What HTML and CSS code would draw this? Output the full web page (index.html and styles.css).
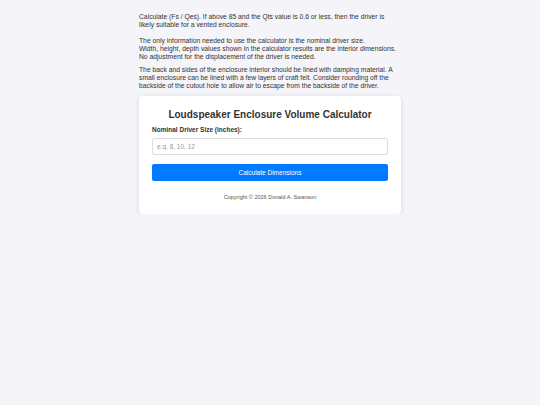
FILE: index.html
```html
<!DOCTYPE html>
<html lang="en">
  <head>
    <meta charset="UTF-8" />
    <meta name="viewport" content="width=device-width, initial-scale=1.0" />
    <title>Loudspeaker Enclosure Volume Calculator</title>
    <link rel="stylesheet" href="styles.css">
  </head>
  <body>
    <div id="page">
      <!-- notes above the calculator -->
      <div id="notes">
        <p class="intro">
          Calculate (Fs / Qes). If above 85 and the Qts value is 0.6 or less, then the driver is
          likely suitable for a vented enclosure.
        </p>
        <p>
          The only information needed to use the calculator is the nominal driver size.<br />
          Width, height, depth values shown in the calculator results are the interior dimensions.<br />
          No adjustment for the displacement of the driver is needed.
        </p>
        <p>
          The back and sides of the enclosure interior should be lined with damping material. A
          small enclosure can be lined with a few layers of craft felt. Consider rounding off the
          backside of the cutout hole to allow air to escape from the backside of the driver.
        </p>
      </div>

      <!-- CALCULATOR -->
      <div id="calculator">
        <h1 id="calcTitle">Loudspeaker Enclosure Volume Calculator</h1>
        <label for="driverSize" class="fieldLabel">Nominal Driver Size (inches):</label>
        <input type="text" id="driverSize" placeholder="e.g. 8, 10, 12" />
        <button id="calcButton">Calculate Dimensions</button>
        <div id="results"></div>
        <div id="copyright">Copyright © 2026 Donald A. Swanson</div>
      </div>
    </div>
  </body>
</html>
```

FILE: styles.css
```css
body {
  margin: 0;
  background-color: #f4f4f9;
  color: #333;
  font-family: "Liberation Sans", Arial, sans-serif;
}

#page {
  width: 262px;
  margin: 0 auto;
  padding-top: 13px;
}

#notes p {
  margin: 0 0 5px;
  font-size: 6.75px;
  line-height: 8px;
}

#notes p.intro {
  margin-bottom: 8px;
}

#calculator {
  margin-top: 6px;
  background: #fff;
  border-radius: 4px;
  padding: 13px;
  box-shadow: 0 1px 5px rgba(0, 0, 0, 0.12);
  display: flex;
  flex-direction: column;
}

#calcTitle {
  margin: 0 0 6px;
  text-align: center;
  font-size: 10px;
  line-height: 11px;
  color: #333;
}

.fieldLabel {
  font-size: 6.5px;
  line-height: 8px;
  font-weight: bold;
  margin-bottom: 4px;
}

#driverSize {
  height: 17px;
  box-sizing: border-box;
  border: 1px solid #ddd;
  border-radius: 2px;
  padding: 0 4px;
  font-family: inherit;
  font-size: 6.5px;
  color: #333;
}

#driverSize::placeholder {
  color: #999;
}

#calcButton {
  margin-top: 9px;
  height: 17px;
  border: none;
  border-radius: 2px;
  background: #007bff;
  color: #fff;
  font-family: inherit;
  font-size: 6.5px;
  cursor: pointer;
}

#copyright {
  margin-top: 13px;
  text-align: center;
  font-size: 5.5px;
  line-height: 7px;
  color: #555;
}
```
